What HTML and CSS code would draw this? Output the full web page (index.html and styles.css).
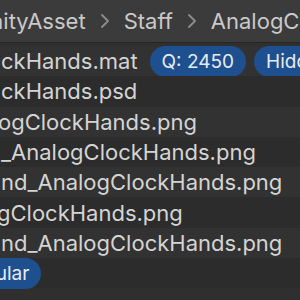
FILE: index.html
```html
<!DOCTYPE html>
<html>
<head>
<meta charset="utf-8">
<link rel="stylesheet" href="styles.css">
</head>
<body>
<div class="panel">
  <div class="crumbs">
    <span class="crumb c-root">UnityAsset</span>
    <svg class="sep" width="10" height="16" viewBox="0 0 10 16"><path d="M2 2 L8 8 L2 14" fill="none" stroke="#8a8a8a" stroke-width="2" stroke-linecap="round" stroke-linejoin="round"/></svg>
    <span class="crumb">Staff</span>
    <svg class="sep" width="10" height="16" viewBox="0 0 10 16"><path d="M2 2 L8 8 L2 14" fill="none" stroke="#8a8a8a" stroke-width="2" stroke-linecap="round" stroke-linejoin="round"/></svg>
    <span class="crumb">AnalogClockHands</span>
  </div>
  <div class="list">
    <div class="row r1"><span class="name">ckHands.mat</span><span class="pill">Q: 2450</span><span class="pill">Hidden</span></div>
    <div class="row r2"><span class="name">ckHands.psd</span></div>
    <div class="row r3"><span class="name">ogClockHands.png</span></div>
    <div class="row r4"><span class="name">_AnalogClockHands.png</span></div>
    <div class="row r5"><span class="name">nd_AnalogClockHands.png</span></div>
    <div class="row r6"><span class="name">gClockHands.png</span></div>
    <div class="row r7"><span class="name">nd_AnalogClockHands.png</span></div>
    <div class="row r8"><span class="pill pill-start">Regular</span></div>
  </div>
</div>
</body>
</html>
```
FILE: styles.css
```css
html, body {
  margin: 0;
  padding: 0;
  background: #2f2f2f;
}
body {
  width: 300px;
  height: 300px;
  overflow: hidden;
  font-family: Inter, "Noto Sans", sans-serif;
  color: #d4d4d4;
}
.panel {
  display: flex;
  flex-direction: column;
}
.crumbs {
  height: 42px;
  background: #3b3b3b;
  border-bottom: 1px solid #262626;
  display: flex;
  align-items: center;
  gap: 14px;
  white-space: nowrap;
  font-size: 22px;
  color: #c9c9c9;
}
.c-root {
  margin-left: -26px;
}
.sep {
  flex: none;
}
.list {
  display: flex;
  flex-direction: column;
  padding-top: 3px;
}
.row {
  height: 30.3px;
  display: flex;
  align-items: center;
  gap: 8px;
  white-space: nowrap;
  font-size: 22px;
  padding-left: 1px;
}
.row:nth-child(even) {
  background: #2c2c2c;
}
.row:nth-child(odd) {
  background: #323232;
}
.pill {
  background: #1e4f8e;
  color: #e6ecf4;
  border-radius: 16px;
  height: 31px;
  display: flex;
  align-items: center;
  padding: 0 12px;
  font-size: 19px;
  flex: none;
}
.r1 .name {
  margin-right: 4px;
}
.r3 .name {
  margin-left: -3px;
}
.r6 .name {
  margin-left: -4px;
}
.pill-start {
  margin-left: -52px;
  padding-left: 12px;
}
```
